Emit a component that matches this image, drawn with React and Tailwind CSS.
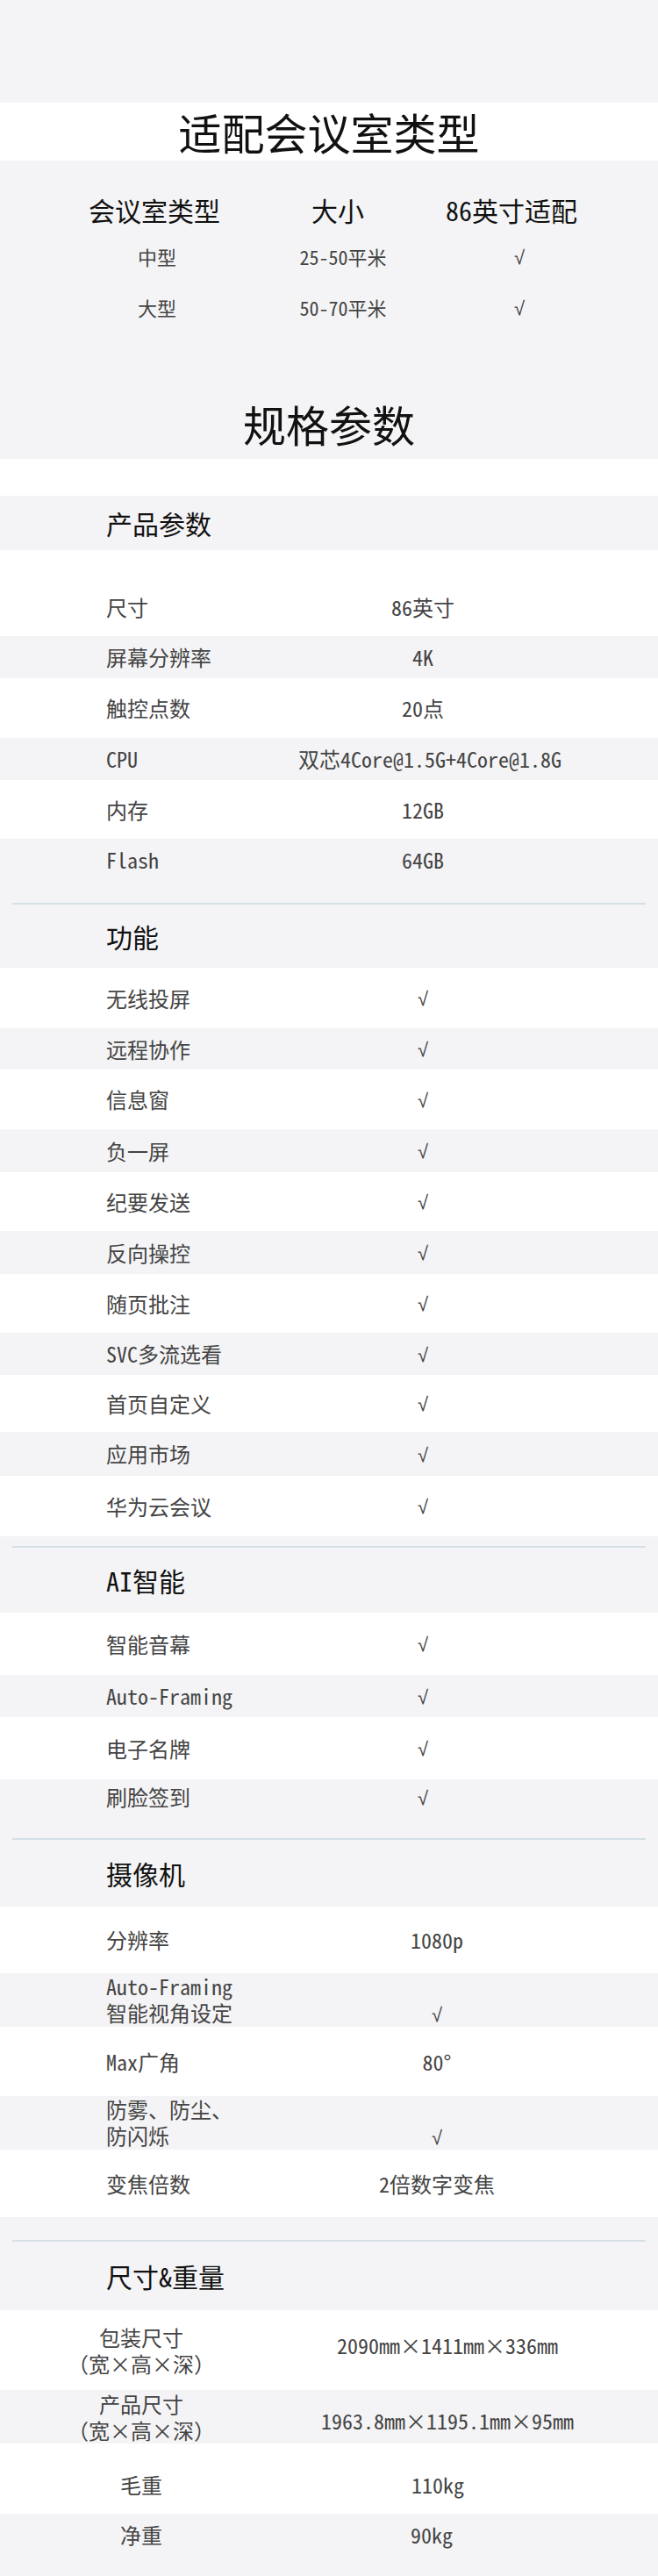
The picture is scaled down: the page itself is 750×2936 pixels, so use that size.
const font = "font-['Noto_Sans_Mono_CJK_SC','Noto_Sans_CJK_SC',sans-serif]";

const GRAY = 'bg-[#f4f4f6]';

function Check() {
  return <span className="font-['Liberation_Sans',sans-serif] text-[22px]">√</span>;
}

function Row({ label, value, h, gray, cols = 'grid-cols-[312px_340px]' }) {
  return (
    <div className={`grid ${cols} items-center ${h} ${gray ? GRAY : 'bg-white'}`}>
      <div className="pl-[121px] text-[24px] leading-[30px] whitespace-nowrap text-[#444]">{label}</div>
      <div className="text-center text-[24px] leading-[30px] whitespace-nowrap text-[#444]">{value}</div>
    </div>
  );
}

function TwoLineRow({ lines, value, h, gray }) {
  return (
    <div className={`grid grid-cols-[328px_340px] items-start ${h} ${gray ? GRAY : 'bg-white'}`}>
      <div className="pl-[121px] text-[24px] leading-[30px] whitespace-nowrap text-[#444]">
        {lines.map((l) => (
          <div key={l}>{l}</div>
        ))}
      </div>
      <div className="mt-[30px] text-center text-[24px] leading-[30px] text-[#444]">{value}</div>
    </div>
  );
}

function SizeRow({ lines, value, h, gray, rowCls = '', valueCls = '' }) {
  return (
    <div className={`grid grid-cols-[322px_376px] items-center ${h} ${rowCls} ${gray ? GRAY : 'bg-white'}`}>
      <div className="text-center text-[24px] leading-[30px] whitespace-nowrap text-[#444]">
        {lines.map((l) => (
          <div key={l}>{l}</div>
        ))}
      </div>
      <div className={`text-center text-[24px] leading-[30px] whitespace-nowrap text-[#444] ${valueCls}`}>{value}</div>
    </div>
  );
}

function SectionHead({ title, h, lineTop }) {
  return (
    <div className={`flex flex-col ${GRAY} ${h}`}>
      {lineTop && <div className={`${lineTop} mx-[14px] h-[2px] bg-[#d4e0e6]`} />}
      <div className="flex flex-1 items-center pl-[121px] text-[30px] leading-[36px] font-medium text-[#111]">{title}</div>
    </div>
  );
}

export default function App() {
  return (
    <div className={`w-[750px] ${font} bg-white`}>
      <div className={`h-[117px] ${GRAY}`} />
      <div className="flex h-[66px] items-center justify-center bg-white text-[49px] leading-[60px] font-medium text-[#111]">
        适配会议室类型
      </div>

      <div className={`${GRAY} pt-[34px] pb-[10px]`}>
        <div className="grid h-[40px] grid-cols-[208px_210px_186px] items-center pl-[72px] text-center text-[30px] font-medium text-[#111]">
          <div>会议室类型</div>
          <div>大小</div>
          <div>86英寸适配</div>
        </div>
        <div className="mt-[15px] grid h-[40px] grid-cols-[214px_210px_192px] items-center pl-[72px] text-center text-[22px] text-[#444]">
          <div>中型</div>
          <div>25-50平米</div>
          <div><Check /></div>
        </div>
        <div className="mt-[18px] grid h-[40px] grid-cols-[214px_210px_192px] items-center pl-[72px] text-center text-[22px] text-[#444]">
          <div>大型</div>
          <div>50-70平米</div>
          <div><Check /></div>
        </div>
        <div className="mt-[83px] flex h-[60px] items-center justify-center text-[49px] font-medium text-[#111]">规格参数</div>
      </div>

      <div className="h-[42px] bg-white" />
      <SectionHead title="产品参数" h="h-[62px]" />
      <div className="h-[31px] bg-white" />
      <Row label="尺寸" value="86英寸" h="h-[67px]" />
      <Row label="屏幕分辨率" value="4K" h="h-[48px]" gray />
      <Row label="触控点数" value="20点" h="h-[68px]" />
      <Row label="CPU" value="双芯4Core@1.5G+4Core@1.8G" h="h-[48px]" gray cols="grid-cols-[312px_356px]" />
      <Row label="内存" value="12GB" h="h-[67px]" />
      <Row label="Flash" value="64GB" h="h-[48px]" gray />

      <SectionHead title="功能" h="h-[99px]" lineTop="mt-[25px]" />
      <Row label="无线投屏" value={<Check />} h="h-[69px]" />
      <Row label="远程协作" value={<Check />} h="h-[47px]" gray />
      <Row label="信息窗" value={<Check />} h="h-[68px]" />
      <Row label="负一屏" value={<Check />} h="h-[49px]" gray />
      <Row label="纪要发送" value={<Check />} h="h-[67px]" />
      <Row label="反向操控" value={<Check />} h="h-[49px]" gray />
      <Row label="随页批注" value={<Check />} h="h-[67px]" />
      <Row label="SVC多流选看" value={<Check />} h="h-[48px]" gray />
      <Row label="首页自定义" value={<Check />} h="h-[65px]" />
      <Row label="应用市场" value={<Check />} h="h-[50px]" gray />
      <Row label="华为云会议" value={<Check />} h="h-[69px]" />

      <SectionHead title="AI智能" h="h-[87px]" lineTop="mt-[11px]" />
      <Row label="智能音幕" value={<Check />} h="h-[71px]" />
      <Row label="Auto-Framing" value={<Check />} h="h-[48px]" gray />
      <Row label="电子名牌" value={<Check />} h="h-[71px]" />
      <Row label="刷脸签到" value={<Check />} h="h-[40px]" gray />

      <SectionHead title="摄像机" h="h-[105px]" lineTop="mt-[27px]" />
      <Row label="分辨率" value="1080p" h="h-[76px]" cols="grid-cols-[328px_340px]" />
      <TwoLineRow lines={['Auto-Framing', '智能视角设定']} value={<Check />} h="h-[61px]" gray />
      <Row label="Max广角" value="80°" h="h-[79px]" cols="grid-cols-[328px_340px]" />
      <TwoLineRow lines={['防雾、防尘、', '防闪烁']} value={<Check />} h="h-[61px]" gray />
      <Row label="变焦倍数" value="2倍数字变焦" h="h-[77px]" cols="grid-cols-[328px_340px]" />

      <SectionHead title="尺寸&重量" h="h-[106px]" lineTop="mt-[26px]" />
      <SizeRow lines={['包装尺寸', '（宽×高×深）']} value="2090mm×1411mm×336mm" h="h-[91px]" valueCls="-mt-[12px]" />
      <SizeRow lines={['产品尺寸', '（宽×高×深）']} value="1963.8mm×1195.1mm×95mm" h="h-[61px]" gray valueCls="mt-[8px]" />
      <SizeRow lines={['毛重']} value="110kg" h="h-[80px]" rowCls="pt-[14px]" valueCls="pr-[22px]" />
      <SizeRow lines={['净重']} value="90kg" h="h-[71px]" gray rowCls="pb-[24px]" valueCls="pr-[36px]" />
    </div>
  );
}
